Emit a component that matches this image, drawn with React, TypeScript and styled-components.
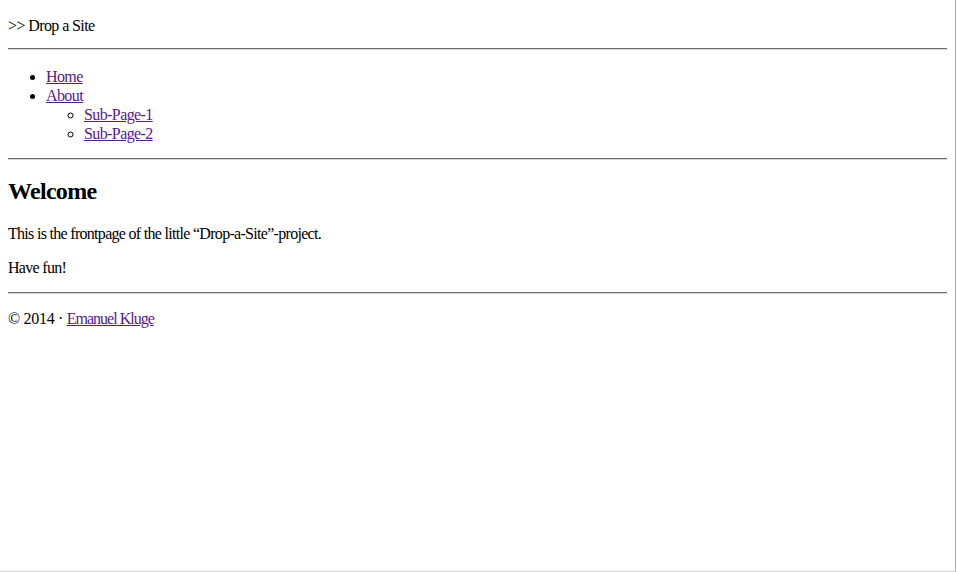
import styled, { createGlobalStyle } from 'styled-components'

const GlobalStyle = createGlobalStyle`
	html, body {
		margin: 0;
		padding: 0;
		background: #fff;
	}
	body {
		font-family: "Liberation Serif", "Times New Roman", serif;
		font-size: 16px;
		color: #000;
		letter-spacing: -0.6px;
	}
`

const Frame = styled.div`
	box-sizing: border-box;
	width: 956px;
	height: 572px;
	padding: 8px;
	border-right: 1px solid #a9a9a9;
	border-bottom: 1px solid #d4d4d4;
	overflow: hidden;
	display: flow-root;
`

const Brand = styled.div`
	margin: 9px 0 13px;
`

const Rule = styled.hr`
	margin: 0;
	border: none;
	height: 2px;
	background: linear-gradient(#6a6a6a 0 1px, #d8d8d8 1px 2px);
`

const Nav = styled.ul`
	margin: 17px 0 15px;
	padding-left: 38px;
	list-style: disc;
`

const SubList = styled.ul`
	margin: 0;
	padding-left: 38px;
	list-style: circle;
`

const Item = styled.li`
	line-height: 19px;
`

const Link = styled.a`
	color: #551a8b;
	text-decoration: underline;
`

const Heading = styled.h2`
	font-size: 24px;
	font-weight: bold;
	margin: 18px 0 20px;
	line-height: 27px;
	letter-spacing: -0.7px;
`

const Text = styled.p<{$last?: boolean}>`
	margin: 0 0 ${props => props.$last ? '15px' : '16px'};
	line-height: 18px;
	letter-spacing: -0.7px;
`

const Footer = styled.footer`
	margin-top: 16px;
	line-height: 18px;
	letter-spacing: -0.3px;

	a {
		letter-spacing: -1px;
	}
`

export default function App () {
	return <Frame>
		<GlobalStyle />
		<Brand>&gt;&gt; Drop a Site</Brand>
		<Rule />
		<Nav>
			<Item><Link href="#">Home</Link></Item>
			<Item>
				<Link href="#">About</Link>
				<SubList>
					<Item><Link href="#">Sub-Page-1</Link></Item>
					<Item><Link href="#">Sub-Page-2</Link></Item>
				</SubList>
			</Item>
		</Nav>
		<Rule />
		<Heading>Welcome</Heading>
		<Text>This is the frontpage of the little “Drop-a-Site”-project.</Text>
		<Text $last>Have fun!</Text>
		<Rule />
		<Footer>© 2014 · <Link href="#">Emanuel Kluge</Link></Footer>
	</Frame>
}
